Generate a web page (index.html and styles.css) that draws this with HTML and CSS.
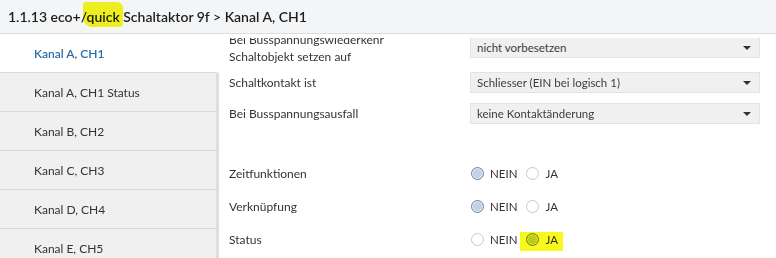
FILE: index.html
```html
<!DOCTYPE html>
<html lang="de">
<head>
    <meta charset="UTF-8">
    <title>Kanal A, CH1</title>
    <link rel="stylesheet" href="styles.css">
</head>
<body>
    <div class="window">
        <div class="title-bar">
            <h1>1.1.13 eco+/<span class="marker">quick</span> Schaltaktor 9f &gt; Kanal A, CH1</h1>
        </div>

        <div class="workspace">
            <ul class="channel-list">
                <li class="channel active">Kanal A, CH1</li>
                <li class="channel">Kanal A, CH1 Status</li>
                <li class="channel">Kanal B, CH2</li>
                <li class="channel">Kanal C, CH3</li>
                <li class="channel">Kanal D, CH4</li>
                <li class="channel">Kanal E, CH5</li>
            </ul>

            <div class="params">
                <div class="params-view">
                    <div class="params-scroll">
                        <div class="param tall">
                            <div class="param-label">Bei Busspannungswiederkehr<br>Schaltobjekt setzen auf</div>
                            <div class="select">nicht vorbesetzen<span class="caret"></span></div>
                        </div>
                        <div class="param">
                            <div class="param-label">Schaltkontakt ist</div>
                            <div class="select">Schliesser (EIN bei logisch 1)<span class="caret"></span></div>
                        </div>
                        <div class="param">
                            <div class="param-label">Bei Busspannungsausfall</div>
                            <div class="select">keine Kontaktänderung<span class="caret"></span></div>
                        </div>

                        <div class="param-gap"></div>

                        <div class="param radio-row">
                            <div class="param-label">Zeitfunktionen</div>
                            <div class="radio-group">
                                <span class="radio checked"><i></i>NEIN</span>
                                <span class="radio"><i></i>JA</span>
                            </div>
                        </div>
                        <div class="param radio-row">
                            <div class="param-label">Verknüpfung</div>
                            <div class="radio-group">
                                <span class="radio checked"><i></i>NEIN</span>
                                <span class="radio"><i></i>JA</span>
                            </div>
                        </div>
                        <div class="param radio-row">
                            <div class="param-label">Status</div>
                            <div class="radio-group">
                                <span class="radio"><i></i>NEIN</span>
                                <span class="radio checked marked"><i></i>JA</span>
                            </div>
                        </div>
                    </div>
                </div>
            </div>
        </div>
    </div>
</body>
</html>
```

FILE: styles.css
```css
body {
    margin: 0;
    font-family: Lato, "Noto Sans", sans-serif;
    background: #fff;
    color: #333;
}

.window {
    width: 776px;
    height: 258px;
    overflow: hidden;
}

.title-bar {
    height: 33px;
    background: #f4f5f6;
    border-bottom: 1px solid #dcdcdc;
    display: flex;
    align-items: center;
    padding-left: 8px;
}

.title-bar h1 {
    margin: 0;
    font-size: 14px;
    line-height: 18px;
    font-weight: 600;
    color: #1e1e1e;
}

/* yellow marker pen, drawn over the text */
.marker {
    position: relative;
}

.marker::after {
    content: "";
    position: absolute;
    left: -4px;
    right: -3px;
    top: -6px;
    bottom: -2px;
    background: #f8f820;
    border-radius: 3px 6px 4px 9px;
    mix-blend-mode: multiply;
}

.workspace {
    display: flex;
    height: 224px;
}

.channel-list {
    list-style: none;
    margin: 0;
    padding: 0;
    width: 220px;
    flex-shrink: 0;
}

.channel {
    height: 38px;
    display: flex;
    align-items: center;
    padding-left: 34px;
    font-size: 12px;
    color: #333;
    background: #f0f0f0;
    border-bottom: 1px solid #dadada;
    border-right: 3px solid #dedede;
    margin-right: 1px;
}

.channel.active {
    background: #fff;
    color: #2b6da6;
    font-weight: 600;
    border-right-color: #fff;
}

.params {
    flex: 1;
    padding-top: 4px;
}

.params-view {
    height: 220px;
    overflow: hidden;
}

.params-scroll {
    margin-top: -10px;
    padding-left: 9px;
}

.param {
    display: flex;
    align-items: center;
    height: 31px;
}

.param.tall {
    height: 39px;
}

.param-gap {
    height: 28px;
}

.radio-row {
    height: 33px;
}

.param-label {
    width: 241px;
    font-size: 12px;
    line-height: 17px;
    color: #333;
}

.select {
    position: relative;
    width: 282px;
    height: 19px;
    line-height: 19px;
    padding-left: 6px;
    background: #f0f0f0;
    border: 1px solid #e3e3e3;
    font-size: 11.5px;
    color: #3c3c3c;
}

.caret {
    position: absolute;
    right: 8px;
    top: 8px;
    border-left: 4px solid transparent;
    border-right: 4px solid transparent;
    border-top: 4px solid #333;
}

.radio-group {
    display: flex;
    gap: 9px;
    padding-left: 1px;
}

.radio {
    display: flex;
    align-items: center;
    gap: 6px;
    font-size: 11.5px;
    line-height: 14px;
    color: #333;
    position: relative;
}

.radio i {
    width: 11px;
    height: 11px;
    border: 1px solid #c9c9c9;
    border-radius: 50%;
    background: #fff;
}

.radio.checked i {
    border-color: #74869b;
    background: #c2d2e5;
    box-shadow: inset 0 0 0 1px #e4ecf5;
}

.radio.marked::after {
    content: "";
    position: absolute;
    left: -6px;
    right: -5px;
    top: -1px;
    bottom: -4px;
    background: #f8f820;
    mix-blend-mode: multiply;
}
```
